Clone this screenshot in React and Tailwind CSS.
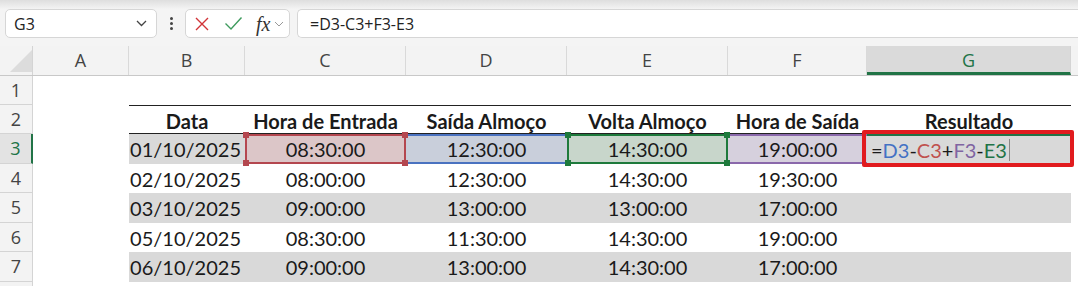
import React from 'react'

// column widths in px, from A to G (H takes what is left)
const cols = [
  { key: 'A', w: 'w-[96px]' },
  { key: 'B', w: 'w-[116px]' },
  { key: 'C', w: 'w-[161px]' },
  { key: 'D', w: 'w-[161px]' },
  { key: 'E', w: 'w-[161px]' },
  { key: 'F', w: 'w-[139px]' },
  { key: 'G', w: 'w-[204px]' },
]

const rows = [
  ['02/10/2025', '08:00:00', '12:30:00', '14:30:00', '19:30:00'],
  ['03/10/2025', '09:00:00', '13:00:00', '13:00:00', '17:00:00'],
  ['05/10/2025', '08:30:00', '11:30:00', '14:30:00', '19:00:00'],
  ['06/10/2025', '09:00:00', '13:00:00', '14:30:00', '17:00:00'],
]

const cellFont = "font-['Lato','Liberation_Sans',sans-serif] text-[20px] text-[#1a1a1a]"

function RowHead({ n, active }) {
  return (
    <div
      className={`w-[33px] shrink-0 flex items-center justify-center border-r border-b border-[#d4d4d4] text-[18px] font-['Open_Sans',sans-serif] ${
        active
          ? 'bg-[#e3e3e3] text-[#217346] border-r-2 border-r-[#217346]'
          : 'bg-[#f3f3f3] text-[#444]'
      }`}
    >
      {n}
    </div>
  )
}

function Corners({ color }) {
  return (
    <>
      <span className={`absolute -left-[4px] -top-[4px] w-[6px] h-[6px] ${color}`} />
      <span className={`absolute -right-[4px] -top-[4px] w-[6px] h-[6px] ${color}`} />
      <span className={`absolute -left-[4px] -bottom-[4px] w-[6px] h-[6px] ${color}`} />
      <span className={`absolute -right-[4px] -bottom-[4px] w-[6px] h-[6px] ${color}`} />
    </>
  )
}

function FormulaBar() {
  return (
    <div className="flex items-center w-full h-[29px] bg-[#f4f4f4]">
      {/* name box */}
      <div className="ml-[5px] w-[152px] h-[29px] rounded-[5px] border border-[#d6d6d6] bg-white flex items-center justify-between pl-[8px] pr-[9px]">
        <span className="font-['Open_Sans',sans-serif] text-[16px] text-[#222]">G3</span>
        <svg width="11" height="7" viewBox="0 0 11 7" fill="none">
          <path d="M1 1l4.5 4.5L10 1" stroke="#444" strokeWidth="1.3" />
        </svg>
      </div>
      {/* dots */}
      <div className="w-[28px] flex flex-col items-center gap-[2px]">
        <span className="w-[3px] h-[3px] rounded-full bg-[#444]" />
        <span className="w-[3px] h-[3px] rounded-full bg-[#444]" />
        <span className="w-[3px] h-[3px] rounded-full bg-[#444]" />
      </div>
      {/* cancel / enter / fx */}
      <div className="w-[105px] h-[29px] rounded-[5px] border border-[#d6d6d6] bg-white flex items-center pl-[8px]">
        <svg width="16" height="16" viewBox="0 0 16 16" fill="none">
          <path d="M2 2l12 12M14 2L2 14" stroke="#d13438" strokeWidth="1.4" />
        </svg>
        <svg className="ml-[14px]" width="19" height="15" viewBox="0 0 19 15" fill="none">
          <path d="M1.5 7.5l5.5 5.5L17.5 1.5" stroke="#3f9b5e" strokeWidth="1.4" />
        </svg>
        <span className="ml-[13px] font-['Liberation_Serif',serif] italic text-[20px] leading-none text-[#333]">
          fx
        </span>
        <svg className="ml-[4px]" width="10" height="6" viewBox="0 0 10 6" fill="none">
          <path d="M1 1l4 4 4-4" stroke="#999" strokeWidth="1" />
        </svg>
      </div>
      {/* formula input */}
      <div className="ml-[7px] flex-1 h-[29px] rounded-l-[5px] border border-r-0 border-[#d6d6d6] bg-white flex items-center pl-[12px]">
        <span className="font-['Open_Sans',sans-serif] text-[16px] text-[#222]">=D3-C3+F3-E3</span>
      </div>
    </div>
  )
}

function ColumnHeaders() {
  return (
    <div className="flex h-[30px] mt-[8px] bg-[#f3f3f3] border-b border-[#c8c8c8]">
      <div className="w-[33px] shrink-0 border-r border-[#d4d4d4] relative">
        <svg className="absolute left-[10px] top-[4px]" width="22" height="22" viewBox="0 0 22 22">
          <path d="M22 0V22H0Z" fill="#dcdcdc" />
        </svg>
      </div>
      {cols.map((c) =>
        c.key === 'G' ? (
          <div
            key={c.key}
            className={`${c.w} shrink-0 flex items-center justify-center bg-[#dadada] border-b-[3px] border-[#217346] text-[#217346] font-['Open_Sans',sans-serif] text-[18px] pt-[2px] border-r border-r-[#d4d4d4]`}
          >
            {c.key}
          </div>
        ) : (
          <div
            key={c.key}
            className={`${c.w} shrink-0 flex items-center justify-center border-r border-[#d9d9d9] text-[#444] font-['Open_Sans',sans-serif] text-[18px]`}
          >
            {c.key}
          </div>
        )
      )}
      <div className="flex-1" />
    </div>
  )
}

export default function App() {
  return (
    <div className="w-[1078px] h-[286px] overflow-hidden bg-white">
      <div className="h-[9px] bg-gradient-to-b from-[#dedede] to-[#f4f4f4]" />
      <div className="bg-[#f4f4f4]">
        <FormulaBar />
        <ColumnHeaders />
      </div>

      {/* row 1 */}
      <div className="flex h-[29px]">
        <RowHead n={1} />
      </div>

      {/* row 2: table header */}
      <div className="flex h-[29px]">
        <RowHead n={2} />
        <div className="w-[96px] shrink-0" />
        <div className={`flex ${cellFont} font-bold border-t border-b border-[#222]`}>
          <div className="w-[116px] flex items-center justify-center pt-[3px]">Data</div>
          <div className="w-[161px] flex items-center justify-center pt-[3px]">Hora de Entrada</div>
          <div className="w-[161px] flex items-center justify-center pt-[3px]">Saída Almoço</div>
          <div className="w-[161px] flex items-center justify-center pt-[3px]">Volta Almoço</div>
          <div className="w-[139px] flex items-center justify-center pt-[3px]">Hora de Saída</div>
          <div className="w-[204px] flex items-center justify-center pt-[3px]">Resultado</div>
        </div>
      </div>

      {/* row 3: editing G3 */}
      <div className="flex h-[30px]">
        <RowHead n={3} active />
        <div className="w-[96px] shrink-0" />
        <div className={`flex ${cellFont}`}>
          <div className="w-[116px] flex items-center justify-end pr-[4px] bg-[#d9d9d9]">01/10/2025</div>
          <div className="w-[161px] relative flex items-center justify-center bg-[#dcc6c8] border-2 border-[#b4474f]">
            08:30:00
            <Corners color="bg-[#b4474f]" />
          </div>
          <div className="w-[161px] flex items-center justify-center bg-[#c9cfdb] border-y-2 border-[#4a72c0]">
            12:30:00
          </div>
          <div className="w-[161px] relative flex items-center justify-center bg-[#c8d6cb] border-2 border-[#1e7a3c]">
            14:30:00
            <Corners color="bg-[#1e7a3c]" />
          </div>
          <div className="w-[139px] flex items-center justify-center bg-[#d6d0dd] border-y-2 border-[#8a68ab]">
            19:00:00
          </div>
          <div className="w-[204px] relative flex items-center bg-[#d9d9d9] border-t-2 border-[#217346] pl-[4px]">
            <span>=</span>
            <span className="text-[#4472c4]">D3</span>
            <span>-</span>
            <span className="text-[#c0504d]">C3</span>
            <span>+</span>
            <span className="text-[#8064a2]">F3</span>
            <span>-</span>
            <span className="text-[#217346]">E3</span>
            <span className="ml-[2px] w-px h-[22px] bg-[#888]" />
            <span className="absolute -left-[5px] -right-[3px] -top-[6px] -bottom-[3px] border-[4px] border-[#e11b1e] rounded-[2px]" />
          </div>
        </div>
      </div>

      {rows.map((r, i) => (
        <div key={r[0]} className={`flex ${i % 2 === 1 ? 'h-[30px]' : 'h-[29px]'}`}>
          <RowHead n={i + 4} />
          <div className="w-[96px] shrink-0" />
          <div className={`flex ${cellFont} ${i % 2 === 0 ? '' : 'bg-[#d9d9d9]'}`}>
            <div className="w-[116px] flex items-center justify-end pr-[4px]">{r[0]}</div>
            <div className="w-[161px] flex items-center justify-center">{r[1]}</div>
            <div className="w-[161px] flex items-center justify-center">{r[2]}</div>
            <div className="w-[161px] flex items-center justify-center">{r[3]}</div>
            <div className="w-[139px] flex items-center justify-center">{r[4]}</div>
            <div className="w-[204px]" />
          </div>
        </div>
      ))}

      {/* row 8, cut off at the bottom edge */}
      <div className="flex h-[30px]">
        <RowHead n="" />
      </div>
    </div>
  )
}
